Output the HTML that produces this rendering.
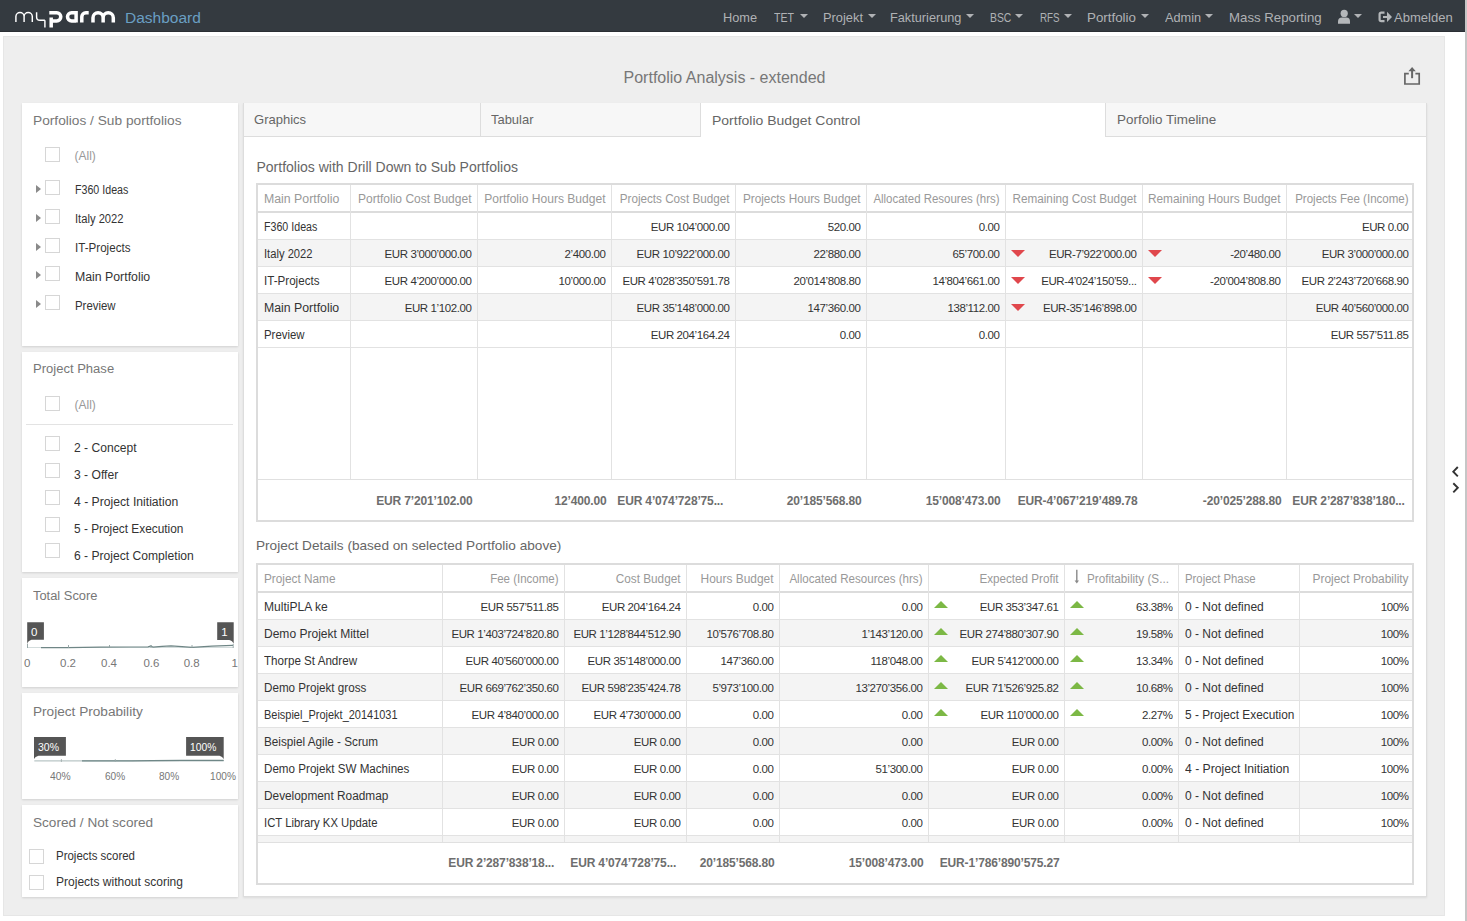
<!DOCTYPE html><html><head><meta charset="utf-8"><style>
*{box-sizing:border-box;margin:0;padding:0}
html,body{width:1467px;height:921px;overflow:hidden;background:#fff;font-family:"Liberation Sans",sans-serif;position:relative}
.abs{position:absolute}
.nav{position:absolute;left:0;top:0;width:1465px;height:31.5px;background:#343a40;border-bottom:1px solid #2b2f34}
.vline{position:absolute;left:1465px;top:0;width:2px;height:921px;background:#c6c6c6}
.nt{position:absolute;top:1.8px;height:31px;line-height:31px;font-size:13px;color:#b0b2b5;white-space:nowrap}
.caret{position:absolute;top:13.8px;width:0;height:0;border-left:4px solid transparent;border-right:4px solid transparent;border-top:4.2px solid #b0b2b5}
.panel{position:absolute;left:3px;top:36px;width:1442px;height:880px;background:#eee;border:1px solid #e6e6e6}
.title{position:absolute;left:-9px;width:1467px;text-align:center;top:68.3px;font-size:16px;color:#777;line-height:20px}
.card{position:absolute;left:22px;width:216px;background:#fff;box-shadow:0 1px 2px rgba(0,0,0,.12)}
.ct{position:absolute;left:32.5px;font-size:13.7px;color:#777;white-space:nowrap;line-height:16px}
.cb{position:absolute;width:15px;height:15px;border:1px solid #d6d6d6;background:#fff}
.it{position:absolute;font-size:12px;color:#333;white-space:nowrap;line-height:14px}
.tri{position:absolute;width:0;height:0;border-top:4.5px solid transparent;border-bottom:4.5px solid transparent;border-left:5px solid #8a8a8a}
.main{position:absolute;left:243px;top:103px;width:1184px;height:794px;background:#fff;border:1px solid #ddd;border-top:none;box-shadow:0 1px 2px rgba(0,0,0,.08)}
.tab{position:absolute;top:0;height:34px;background:#f7f7f7;border-bottom:1px solid #ddd;font-size:13.5px;color:#666;line-height:34px;white-space:nowrap}
.tab span{position:absolute;top:0;margin-top:-0.3px}
.sect{position:absolute;font-size:14px;color:#666;white-space:nowrap;line-height:16px}
.tbl{position:absolute;border:2px solid #dcdcdc;background:#fff}
.c{position:absolute;white-space:nowrap;overflow:hidden;font-size:12px;color:#333}
.h{color:#999}
.num{font-size:11.5px;letter-spacing:-0.4px}
.ft{font-weight:bold;color:#6e6e6e;font-size:12px;letter-spacing:-0.15px}
</style></head><body>
<div class="nav"></div><div class="vline"></div>
<svg class="abs" style="left:0;top:0" width="125" height="31" viewBox="0 0 125 31">
<g fill="none" stroke="#fff" stroke-linecap="butt">
<path d="M15.9 22V16.6a4.1 4.1 0 0 1 8.2 0V22M24.1 16.6a4.1 4.1 0 0 1 8.2 0V22" stroke-width="1.45"/>
<path d="M36.6 12.2V17a3.3 3.3 0 0 0 3.3 3.3H44.9M44.9 20.3V27.5" stroke-width="1.45"/>
<path d="M49.3 12.7H56.7a4.1 4.1 0 0 1 0 8.2H51.2M51.2 17.6V27.6" stroke-width="3.5"/>
<path d="M76.1 11V22.6M76.1 12.7H71.6a4.1 4.1 0 0 0 0 8.2H76.1" stroke-width="3.5"/>
<path d="M81.8 22.6V16.8a4.1 4.1 0 0 1 4.1-4.1H88.7" stroke-width="3.5"/>
<path d="M93 22.6V17.8a5.07 5.07 0 0 1 10.15 0V22.6M103.15 17.8a5.07 5.07 0 0 1 10.15 0V22.6" stroke-width="3.5"/>
</g></svg>
<div class="nt" style="left:125px;font-size:15.5px;color:#6a9fc3;top:1.5px">Dashboard</div>
<div class="nt" style="left:723.3px;display:inline-block;transform:scaleX(0.983);transform-origin:0 0">Home</div>
<div class="nt" style="left:774.0px;display:inline-block;transform:scaleX(0.813);transform-origin:0 0">TET</div>
<div class="caret" style="left:799.6px"></div>
<div class="nt" style="left:823.0px;display:inline-block;transform:scaleX(0.988);transform-origin:0 0">Projekt</div>
<div class="caret" style="left:867.5px"></div>
<div class="nt" style="left:890.0px;display:inline-block;transform:scaleX(0.979);transform-origin:0 0">Fakturierung</div>
<div class="caret" style="left:965.6px"></div>
<div class="nt" style="left:990.2px;display:inline-block;transform:scaleX(0.798);transform-origin:0 0">BSC</div>
<div class="caret" style="left:1015.0px"></div>
<div class="nt" style="left:1039.6px;display:inline-block;transform:scaleX(0.754);transform-origin:0 0">RFS</div>
<div class="caret" style="left:1063.5px"></div>
<div class="nt" style="left:1087.4px;display:inline-block;transform:scaleX(1.027);transform-origin:0 0">Portfolio</div>
<div class="caret" style="left:1141.0px"></div>
<div class="nt" style="left:1165.4px;display:inline-block;transform:scaleX(0.981);transform-origin:0 0">Admin</div>
<div class="caret" style="left:1205.3px"></div>
<div class="nt" style="left:1229.3px;display:inline-block;transform:scaleX(1.018);transform-origin:0 0">Mass Reporting</div>
<svg class="abs" style="left:1337px;top:9px" width="14" height="16" viewBox="0 0 14 16"><circle cx="7.2" cy="4.4" r="3.6" fill="#b4b7ba"/><path d="M1 14.8V12.5C1 10 2.5 8.6 5 8.6H9.4C11.9 8.6 13 10 13 12.5V14.8Z" fill="#b4b7ba"/></svg>
<div class="caret" style="left:1353.8px"></div>
<svg class="abs" style="left:1378px;top:11px" width="15" height="12" viewBox="0 0 15 12"><path d="M6.5 1.6H3.2A1.6 1.6 0 0 0 1.6 3.2V8.6A1.6 1.6 0 0 0 3.2 10.2H6.5" fill="none" stroke="#b4b7ba" stroke-width="2.2"/><path d="M5 4.9H9V0.8L14 5.9L9 11V7H5Z" fill="#b4b7ba"/></svg>
<div class="nt" style="left:1394.2px;display:inline-block;transform:scaleX(1.002);transform-origin:0 0">Abmelden</div>
<div class="panel"></div>
<div class="title">Portfolio Analysis - extended</div>
<svg class="abs" style="left:1403px;top:66px" width="19" height="20" viewBox="0 0 19 20"><path d="M5.8 7.6H1.9V18H16.2V7.6H12.4" fill="none" stroke="#666" stroke-width="1.7"/><path d="M9.1 5V12.2" stroke="#666" stroke-width="2"/><path d="M5.4 5.2L9.1 1L12.8 5.2Z" fill="#666"/></svg>
<div class="card" style="top:102.5px;height:243.5px"></div>
<div class="card" style="top:352.0px;height:219.5px"></div>
<div class="card" style="top:578.0px;height:108.5px"></div>
<div class="card" style="top:693.0px;height:106.0px"></div>
<div class="card" style="top:805.0px;height:92.0px"></div>
<div class="ct" style="top:112.8px;display:inline-block;transform:scaleX(1.001);transform-origin:0 0">Porfolios / Sub portfolios</div>
<div class="ct" style="top:361.4px;display:inline-block;transform:scaleX(0.952);transform-origin:0 0">Project Phase</div>
<div class="ct" style="top:587.9px;display:inline-block;transform:scaleX(0.942);transform-origin:0 0">Total Score</div>
<div class="ct" style="top:703.8px;display:inline-block;transform:scaleX(0.995);transform-origin:0 0">Project Probability</div>
<div class="ct" style="top:814.9px;display:inline-block;transform:scaleX(0.993);transform-origin:0 0">Scored / Not scored</div>
<div class="cb" style="left:45.0px;top:146.5px"></div>
<div class="it" style="left:74.5px;top:148.6px;color:#999">(All)</div>
<div class="tri" style="left:35.5px;top:184.7px"></div>
<div class="cb" style="left:45.0px;top:179.7px"></div>
<div class="it" style="left:74.5px;top:183.1px;display:inline-block;transform:scaleX(0.888);transform-origin:0 0">F360 Ideas</div>
<div class="tri" style="left:35.5px;top:213.6px"></div>
<div class="cb" style="left:45.0px;top:208.6px"></div>
<div class="it" style="left:74.5px;top:212.0px;display:inline-block;transform:scaleX(0.933);transform-origin:0 0">Italy 2022</div>
<div class="tri" style="left:35.5px;top:242.5px"></div>
<div class="cb" style="left:45.0px;top:237.5px"></div>
<div class="it" style="left:74.5px;top:240.9px;display:inline-block;transform:scaleX(0.967);transform-origin:0 0">IT-Projects</div>
<div class="tri" style="left:35.5px;top:271.4px"></div>
<div class="cb" style="left:45.0px;top:266.4px"></div>
<div class="it" style="left:74.5px;top:269.8px;display:inline-block;transform:scaleX(1.025);transform-origin:0 0">Main Portfolio</div>
<div class="tri" style="left:35.5px;top:300.3px"></div>
<div class="cb" style="left:45.0px;top:295.3px"></div>
<div class="it" style="left:74.5px;top:298.7px;display:inline-block;transform:scaleX(0.948);transform-origin:0 0">Preview</div>
<div class="cb" style="left:45.0px;top:395.5px"></div>
<div class="it" style="left:74.5px;top:397.5px;color:#999">(All)</div>
<div class="abs" style="left:26px;top:424px;width:207px;height:1px;background:#e3e3e3"></div>
<div class="cb" style="left:45.0px;top:435.6px"></div>
<div class="it" style="left:74.0px;top:441.0px;display:inline-block;transform:scaleX(1.008);transform-origin:0 0">2 - Concept</div>
<div class="cb" style="left:45.0px;top:462.6px"></div>
<div class="it" style="left:74.0px;top:467.9px;display:inline-block;transform:scaleX(1.011);transform-origin:0 0">3 - Offer</div>
<div class="cb" style="left:45.0px;top:489.5px"></div>
<div class="it" style="left:74.0px;top:494.9px;display:inline-block;transform:scaleX(1.015);transform-origin:0 0">4 - Project Initiation</div>
<div class="cb" style="left:45.0px;top:516.5px"></div>
<div class="it" style="left:74.0px;top:521.9px;display:inline-block;transform:scaleX(0.988);transform-origin:0 0">5 - Project Execution</div>
<div class="cb" style="left:45.0px;top:543.4px"></div>
<div class="it" style="left:74.0px;top:548.8px;display:inline-block;transform:scaleX(1.009);transform-origin:0 0">6 - Project Completion</div>
<svg class="abs" style="left:22px;top:615px" width="216" height="40" viewBox="0 0 216 40">
<path d="M5.2 7.2H21.9V24.8H9.5Q6 25.8 5.2 29.2Z" fill="#555"/>
<path d="M195.2 7.2H211.7V28.8Q210.5 25.5 207.2 24.9H195.2Z" fill="#555"/>
<line x1="5.5" y1="32.5" x2="211.2" y2="32.5" stroke="#d3dcdc" stroke-width="1"/>
<path d="M19 32.6L46 32.6L78 32.2L108 32L126 31.8L129 31L131 32.2L140 31.4L149 30.8L160 31.6L170 32.3L190 31.2L211 30.4" fill="none" stroke="#6f8686" stroke-width="1.2"/>
<path d="M46.5 30V33M87.5 30V33M129 30V33M170 30V33M5.5 29V33M211.2 29V33" stroke="#8fa0a0" stroke-width="0.9"/>
</svg>
<div class="it" style="left:31px;top:625px;color:#fff;font-size:11.5px">0</div>
<div class="it" style="left:221.2px;top:625px;color:#fff;font-size:11.5px">1</div>
<div class="it" style="left:24.0px;top:655.7px;color:#777;font-size:11.5px">0</div>
<div class="it" style="left:60.0px;top:655.7px;color:#777;font-size:11.5px">0.2</div>
<div class="it" style="left:101.0px;top:655.7px;color:#777;font-size:11.5px">0.4</div>
<div class="it" style="left:143.4px;top:655.7px;color:#777;font-size:11.5px">0.6</div>
<div class="it" style="left:183.7px;top:655.7px;color:#777;font-size:11.5px">0.8</div>
<div class="it" style="left:231.4px;top:655.7px;color:#777;font-size:11.5px">1</div>
<svg class="abs" style="left:22px;top:730px" width="216" height="40" viewBox="0 0 216 40">
<path d="M12 7H43.9V25.7H16.5Q13 26.5 12 28.9Z" fill="#555"/>
<path d="M164.1 7H201.7V29Q200.5 26.5 197.5 25.7H164.1Z" fill="#555"/>
<line x1="12.3" y1="30.8" x2="201.7" y2="30.8" stroke="#b9c6c6" stroke-width="1.2"/>
<path d="M60 30.9L110 30.8L130 30.6L160 30.4L201.7 30.3" fill="none" stroke="#6f8787" stroke-width="1.3"/>
<path d="M39.4 29V32M93.3 29V32" stroke="#9aa8a8" stroke-width="0.8"/>
</svg>
<div class="it" style="left:37.6px;top:740px;color:#fff;font-size:11.5px;display:inline-block;transform:scaleX(0.913);transform-origin:0 0">30%</div>
<div class="it" style="left:190.3px;top:740px;color:#fff;font-size:11.5px;display:inline-block;transform:scaleX(0.895);transform-origin:0 0">100%</div>
<div class="it" style="left:50.1px;top:768.7px;color:#777;font-size:11.5px;display:inline-block;transform:scaleX(0.896);transform-origin:0 0">40%</div>
<div class="it" style="left:104.5px;top:768.7px;color:#777;font-size:11.5px;display:inline-block;transform:scaleX(0.878);transform-origin:0 0">60%</div>
<div class="it" style="left:158.5px;top:768.7px;color:#777;font-size:11.5px;display:inline-block;transform:scaleX(0.878);transform-origin:0 0">80%</div>
<div class="it" style="left:209.8px;top:768.7px;color:#777;font-size:11.5px;display:inline-block;transform:scaleX(0.881);transform-origin:0 0">100%</div>
<div class="cb" style="left:29.0px;top:849.0px"></div>
<div class="it" style="left:55.5px;top:848.6px;display:inline-block;transform:scaleX(0.955);transform-origin:0 0">Projects scored</div>
<div class="cb" style="left:29.0px;top:875.3px"></div>
<div class="it" style="left:55.5px;top:874.9px;display:inline-block;transform:scaleX(1.002);transform-origin:0 0">Projects without scoring</div>
<div class="main">
<div class="tab" style="left:0.0px;width:237.0px"><span style="left:10.4px;top:0px;transform:scaleX(0.965);transform-origin:0 0">Graphics</span></div>
<div class="tab" style="left:236.0px;width:220.0px;border-left:1px solid #ddd"><span style="left:10.4px;top:0px;transform:scaleX(0.959);transform-origin:0 0">Tabular</span></div>
<div class="tab" style="left:456.0px;width:405.0px;background:#fff;border-bottom:none;top:0;border-left:1px solid #ddd"><span style="left:10.5px;top:1px;transform:scaleX(1.035);transform-origin:0 0">Portfolio Budget Control</span></div>
<div class="tab" style="left:861.0px;width:321.0px;border-left:1px solid #ddd"><span style="left:10.5px;top:0px;transform:scaleX(0.995);transform-origin:0 0">Porfolio Timeline</span></div>
</div>
<div class="sect" style="left:256.5px;top:158.6px">Portfolios with Drill Down to Sub Portfolios</div>
<div class="sect" style="left:256px;top:537.8px;font-size:13.6px">Project Details (based on selected Portfolio above)</div>
<div class="abs" style="left:256.0px;top:183.0px;width:1157.8px;height:339.0px;border:2px solid #dcdcdc;background:#fff"></div>
<div class="abs" style="left:258.0px;top:240.0px;width:1153.8px;height:26.0px;background:#f4f4f4"></div>
<div class="abs" style="left:258.0px;top:294.0px;width:1153.8px;height:26.0px;background:#f4f4f4"></div>
<div class="abs" style="left:258.0px;top:211.0px;width:1153.8px;height:2.0px;background:#dcdcdc"></div>
<div class="abs" style="left:258.0px;top:239.0px;width:1153.8px;height:1.0px;background:#e2e2e2"></div>
<div class="abs" style="left:258.0px;top:266.0px;width:1153.8px;height:1.0px;background:#e2e2e2"></div>
<div class="abs" style="left:258.0px;top:293.0px;width:1153.8px;height:1.0px;background:#e2e2e2"></div>
<div class="abs" style="left:258.0px;top:320.0px;width:1153.8px;height:1.0px;background:#e2e2e2"></div>
<div class="abs" style="left:258.0px;top:347.0px;width:1153.8px;height:1.0px;background:#e2e2e2"></div>
<div class="abs" style="left:258.0px;top:479.0px;width:1153.8px;height:1.0px;background:#e0e0e0"></div>
<div class="abs" style="left:350.0px;top:185.0px;width:1.0px;height:294.0px;background:#e2e2e2"></div>
<div class="abs" style="left:477.0px;top:185.0px;width:1.0px;height:294.0px;background:#e2e2e2"></div>
<div class="abs" style="left:611.0px;top:185.0px;width:1.0px;height:294.0px;background:#e2e2e2"></div>
<div class="abs" style="left:735.0px;top:185.0px;width:1.0px;height:294.0px;background:#e2e2e2"></div>
<div class="abs" style="left:866.0px;top:185.0px;width:1.0px;height:294.0px;background:#e2e2e2"></div>
<div class="abs" style="left:1005.0px;top:185.0px;width:1.0px;height:294.0px;background:#e2e2e2"></div>
<div class="abs" style="left:1142.0px;top:185.0px;width:1.0px;height:294.0px;background:#e2e2e2"></div>
<div class="abs" style="left:1286.0px;top:185.0px;width:1.0px;height:294.0px;background:#e2e2e2"></div>
<div class="c h" style="left:263.5px;top:191.9px;width:86.5px;transform:scaleX(1.026);transform-origin:0 0;line-height:14px">Main Portfolio</div>
<div class="c h" style="left:351.0px;top:191.9px;width:120.5px;text-align:right;transform:scaleX(1.001);transform-origin:100% 0;line-height:14px">Portfolio Cost Budget</div>
<div class="c h" style="left:478.0px;top:191.9px;width:127.5px;text-align:right;transform:scaleX(1.005);transform-origin:100% 0;line-height:14px">Portfolio Hours Budget</div>
<div class="c h" style="left:612.0px;top:191.9px;width:117.5px;text-align:right;transform:scaleX(0.974);transform-origin:100% 0;line-height:14px">Projects Cost Budget</div>
<div class="c h" style="left:736.0px;top:191.9px;width:124.5px;text-align:right;transform:scaleX(0.979);transform-origin:100% 0;line-height:14px">Projects Hours Budget</div>
<div class="c h" style="left:867.0px;top:191.9px;width:132.5px;text-align:right;transform:scaleX(0.955);transform-origin:100% 0;line-height:14px">Allocated Resoures (hrs)</div>
<div class="c h" style="left:1006.0px;top:191.9px;width:130.5px;text-align:right;transform:scaleX(0.979);transform-origin:100% 0;line-height:14px">Remaining Cost Budget</div>
<div class="c h" style="left:1143.0px;top:191.9px;width:137.5px;text-align:right;transform:scaleX(0.989);transform-origin:100% 0;line-height:14px">Remaining Hours Budget</div>
<div class="c h" style="left:1287.0px;top:191.9px;width:121.6px;text-align:right;transform:scaleX(0.961);transform-origin:100% 0;line-height:14px">Projects Fee (Income)</div>
<div class="c " style="left:263.5px;top:219.5px;width:86.5px;transform:scaleX(0.888);transform-origin:0 0;line-height:14px">F360 Ideas</div>
<div class="c num" style="left:612.0px;top:219.5px;width:117.5px;text-align:right;line-height:14px">EUR 104’000.00</div>
<div class="c num" style="left:736.0px;top:219.5px;width:124.5px;text-align:right;line-height:14px">520.00</div>
<div class="c num" style="left:867.0px;top:219.5px;width:132.5px;text-align:right;line-height:14px">0.00</div>
<div class="c num" style="left:1287.0px;top:219.5px;width:121.6px;text-align:right;line-height:14px">EUR 0.00</div>
<div class="c " style="left:263.5px;top:246.5px;width:86.5px;transform:scaleX(0.933);transform-origin:0 0;line-height:14px">Italy 2022</div>
<div class="c num" style="left:351.0px;top:246.5px;width:120.5px;text-align:right;line-height:14px">EUR 3’000’000.00</div>
<div class="c num" style="left:478.0px;top:246.5px;width:127.5px;text-align:right;line-height:14px">2’400.00</div>
<div class="c num" style="left:612.0px;top:246.5px;width:117.5px;text-align:right;line-height:14px">EUR 10’922’000.00</div>
<div class="c num" style="left:736.0px;top:246.5px;width:124.5px;text-align:right;line-height:14px">22’880.00</div>
<div class="c num" style="left:867.0px;top:246.5px;width:132.5px;text-align:right;line-height:14px">65’700.00</div>
<div class="abs" style="left:1011.4px;top:249.8px;width:0;height:0;border-left:7.5px solid transparent;border-right:7.5px solid transparent;border-top:7.5px solid #e0474c"></div>
<div class="c num" style="left:1006.0px;top:246.5px;width:130.5px;text-align:right;line-height:14px">EUR-7’922’000.00</div>
<div class="abs" style="left:1148.4px;top:249.8px;width:0;height:0;border-left:7.5px solid transparent;border-right:7.5px solid transparent;border-top:7.5px solid #e0474c"></div>
<div class="c num" style="left:1143.0px;top:246.5px;width:137.5px;text-align:right;line-height:14px">-20’480.00</div>
<div class="c num" style="left:1287.0px;top:246.5px;width:121.6px;text-align:right;line-height:14px">EUR 3’000’000.00</div>
<div class="c " style="left:263.5px;top:273.5px;width:86.5px;transform:scaleX(0.967);transform-origin:0 0;line-height:14px">IT-Projects</div>
<div class="c num" style="left:351.0px;top:273.5px;width:120.5px;text-align:right;line-height:14px">EUR 4’200’000.00</div>
<div class="c num" style="left:478.0px;top:273.5px;width:127.5px;text-align:right;line-height:14px">10’000.00</div>
<div class="c num" style="left:612.0px;top:273.5px;width:117.5px;text-align:right;line-height:14px">EUR 4’028’350’591.78</div>
<div class="c num" style="left:736.0px;top:273.5px;width:124.5px;text-align:right;line-height:14px">20’014’808.80</div>
<div class="c num" style="left:867.0px;top:273.5px;width:132.5px;text-align:right;line-height:14px">14’804’661.00</div>
<div class="abs" style="left:1011.4px;top:276.8px;width:0;height:0;border-left:7.5px solid transparent;border-right:7.5px solid transparent;border-top:7.5px solid #e0474c"></div>
<div class="c num" style="left:1006.0px;top:273.5px;width:130.5px;text-align:right;line-height:14px">EUR-4’024’150’59...</div>
<div class="abs" style="left:1148.4px;top:276.8px;width:0;height:0;border-left:7.5px solid transparent;border-right:7.5px solid transparent;border-top:7.5px solid #e0474c"></div>
<div class="c num" style="left:1143.0px;top:273.5px;width:137.5px;text-align:right;line-height:14px">-20’004’808.80</div>
<div class="c num" style="left:1287.0px;top:273.5px;width:121.6px;text-align:right;line-height:14px">EUR 2’243’720’668.90</div>
<div class="c " style="left:263.5px;top:300.5px;width:86.5px;transform:scaleX(1.025);transform-origin:0 0;line-height:14px">Main Portfolio</div>
<div class="c num" style="left:351.0px;top:300.5px;width:120.5px;text-align:right;line-height:14px">EUR 1’102.00</div>
<div class="c num" style="left:612.0px;top:300.5px;width:117.5px;text-align:right;line-height:14px">EUR 35’148’000.00</div>
<div class="c num" style="left:736.0px;top:300.5px;width:124.5px;text-align:right;line-height:14px">147’360.00</div>
<div class="c num" style="left:867.0px;top:300.5px;width:132.5px;text-align:right;line-height:14px">138’112.00</div>
<div class="abs" style="left:1011.4px;top:303.8px;width:0;height:0;border-left:7.5px solid transparent;border-right:7.5px solid transparent;border-top:7.5px solid #e0474c"></div>
<div class="c num" style="left:1006.0px;top:300.5px;width:130.5px;text-align:right;line-height:14px">EUR-35’146’898.00</div>
<div class="c num" style="left:1287.0px;top:300.5px;width:121.6px;text-align:right;line-height:14px">EUR 40’560’000.00</div>
<div class="c " style="left:263.5px;top:327.5px;width:86.5px;transform:scaleX(0.948);transform-origin:0 0;line-height:14px">Preview</div>
<div class="c num" style="left:612.0px;top:327.5px;width:117.5px;text-align:right;line-height:14px">EUR 204’164.24</div>
<div class="c num" style="left:736.0px;top:327.5px;width:124.5px;text-align:right;line-height:14px">0.00</div>
<div class="c num" style="left:867.0px;top:327.5px;width:132.5px;text-align:right;line-height:14px">0.00</div>
<div class="c num" style="left:1287.0px;top:327.5px;width:121.6px;text-align:right;line-height:14px">EUR 557’511.85</div>
<div class="c ft" style="left:351.0px;top:493.7px;width:121.5px;text-align:right;line-height:14px">EUR 7’201’102.00</div>
<div class="c ft" style="left:478.0px;top:493.7px;width:128.5px;text-align:right;line-height:14px">12’400.00</div>
<div class="c ft" style="left:617.3px;top:493.7px;width:117.7px;line-height:14px">EUR 4’074’728’75...</div>
<div class="c ft" style="left:736.0px;top:493.7px;width:125.5px;text-align:right;line-height:14px">20’185’568.80</div>
<div class="c ft" style="left:867.0px;top:493.7px;width:133.5px;text-align:right;line-height:14px">15’008’473.00</div>
<div class="c ft" style="left:1006.0px;top:493.7px;width:131.5px;text-align:right;line-height:14px">EUR-4’067’219’489.78</div>
<div class="c ft" style="left:1143.0px;top:493.7px;width:138.5px;text-align:right;line-height:14px">-20’025’288.80</div>
<div class="c ft" style="left:1292.3px;top:493.7px;width:121.5px;line-height:14px">EUR 2’287’838’180...</div>
<div class="abs" style="left:256.0px;top:563.0px;width:1157.8px;height:321.7px;border:2px solid #dcdcdc;background:#fff"></div>
<div class="abs" style="left:258.0px;top:620.0px;width:1153.8px;height:26.0px;background:#f4f4f4"></div>
<div class="abs" style="left:258.0px;top:674.0px;width:1153.8px;height:26.0px;background:#f4f4f4"></div>
<div class="abs" style="left:258.0px;top:728.0px;width:1153.8px;height:26.0px;background:#f4f4f4"></div>
<div class="abs" style="left:258.0px;top:782.0px;width:1153.8px;height:26.0px;background:#f4f4f4"></div>
<div class="abs" style="left:258.0px;top:836.0px;width:1153.8px;height:6.0px;background:#f4f4f4"></div>
<div class="abs" style="left:258.0px;top:591.0px;width:1153.8px;height:2.0px;background:#dcdcdc"></div>
<div class="abs" style="left:258.0px;top:619.0px;width:1153.8px;height:1.0px;background:#e2e2e2"></div>
<div class="abs" style="left:258.0px;top:646.0px;width:1153.8px;height:1.0px;background:#e2e2e2"></div>
<div class="abs" style="left:258.0px;top:673.0px;width:1153.8px;height:1.0px;background:#e2e2e2"></div>
<div class="abs" style="left:258.0px;top:700.0px;width:1153.8px;height:1.0px;background:#e2e2e2"></div>
<div class="abs" style="left:258.0px;top:727.0px;width:1153.8px;height:1.0px;background:#e2e2e2"></div>
<div class="abs" style="left:258.0px;top:754.0px;width:1153.8px;height:1.0px;background:#e2e2e2"></div>
<div class="abs" style="left:258.0px;top:781.0px;width:1153.8px;height:1.0px;background:#e2e2e2"></div>
<div class="abs" style="left:258.0px;top:808.0px;width:1153.8px;height:1.0px;background:#e2e2e2"></div>
<div class="abs" style="left:258.0px;top:835.0px;width:1153.8px;height:1.0px;background:#e2e2e2"></div>
<div class="abs" style="left:258.0px;top:842.0px;width:1153.8px;height:1.0px;background:#e0e0e0"></div>
<div class="abs" style="left:442.0px;top:565.0px;width:1.0px;height:277.0px;background:#e2e2e2"></div>
<div class="abs" style="left:564.0px;top:565.0px;width:1.0px;height:277.0px;background:#e2e2e2"></div>
<div class="abs" style="left:686.0px;top:565.0px;width:1.0px;height:277.0px;background:#e2e2e2"></div>
<div class="abs" style="left:779.0px;top:565.0px;width:1.0px;height:277.0px;background:#e2e2e2"></div>
<div class="abs" style="left:928.0px;top:565.0px;width:1.0px;height:277.0px;background:#e2e2e2"></div>
<div class="abs" style="left:1064.0px;top:565.0px;width:1.0px;height:277.0px;background:#e2e2e2"></div>
<div class="abs" style="left:1178.0px;top:565.0px;width:1.0px;height:277.0px;background:#e2e2e2"></div>
<div class="abs" style="left:1299.0px;top:565.0px;width:1.0px;height:277.0px;background:#e2e2e2"></div>
<div class="c h" style="left:263.5px;top:571.9px;width:178.5px;transform:scaleX(0.983);transform-origin:0 0;line-height:14px">Project Name</div>
<div class="c h" style="left:443.0px;top:571.9px;width:115.5px;text-align:right;transform:scaleX(0.958);transform-origin:100% 0;line-height:14px">Fee (Income)</div>
<div class="c h" style="left:565.0px;top:571.9px;width:115.5px;text-align:right;transform:scaleX(0.980);transform-origin:100% 0;line-height:14px">Cost Budget</div>
<div class="c h" style="left:687.0px;top:571.9px;width:86.5px;text-align:right;transform:scaleX(0.993);transform-origin:100% 0;line-height:14px">Hours Budget</div>
<div class="c h" style="left:780.0px;top:571.9px;width:142.5px;text-align:right;transform:scaleX(0.964);transform-origin:100% 0;line-height:14px">Allocated Resources (hrs)</div>
<div class="c h" style="left:929.0px;top:571.9px;width:129.5px;text-align:right;transform:scaleX(0.972);transform-origin:100% 0;line-height:14px">Expected Profit</div>
<div class="c h" style="left:1087.4px;top:571.9px;width:90.6px;transform:scaleX(0.975);transform-origin:0 0;line-height:14px">Profitability (S...</div>
<div class="c h" style="left:1184.5px;top:571.9px;width:114.5px;transform:scaleX(0.946);transform-origin:0 0;line-height:14px">Project Phase</div>
<div class="c h" style="left:1300.0px;top:571.9px;width:108.6px;text-align:right;transform:scaleX(0.994);transform-origin:100% 0;line-height:14px">Project Probability</div>
<div class="c " style="left:263.5px;top:599.5px;width:178.5px;transform:scaleX(1.005);transform-origin:0 0;line-height:14px">MultiPLA ke</div>
<div class="c num" style="left:443.0px;top:599.5px;width:115.5px;text-align:right;line-height:14px">EUR 557’511.85</div>
<div class="c num" style="left:565.0px;top:599.5px;width:115.5px;text-align:right;line-height:14px">EUR 204’164.24</div>
<div class="c num" style="left:687.0px;top:599.5px;width:86.5px;text-align:right;line-height:14px">0.00</div>
<div class="c num" style="left:780.0px;top:599.5px;width:142.5px;text-align:right;line-height:14px">0.00</div>
<div class="abs" style="left:934.4px;top:601.3px;width:0;height:0;border-left:7.3px solid transparent;border-right:7.3px solid transparent;border-bottom:7.6px solid #7cb845"></div>
<div class="c num" style="left:929.0px;top:599.5px;width:129.5px;text-align:right;line-height:14px">EUR 353’347.61</div>
<div class="abs" style="left:1070.4px;top:601.3px;width:0;height:0;border-left:7.3px solid transparent;border-right:7.3px solid transparent;border-bottom:7.6px solid #7cb845"></div>
<div class="c num" style="left:1065.0px;top:599.5px;width:107.5px;text-align:right;line-height:14px">63.38%</div>
<div class="c " style="left:1184.5px;top:599.5px;width:114.5px;transform:scaleX(1.001);transform-origin:0 0;line-height:14px">0 - Not defined</div>
<div class="c num" style="left:1300.0px;top:599.5px;width:108.6px;text-align:right;line-height:14px">100%</div>
<div class="c " style="left:263.5px;top:626.5px;width:178.5px;transform:scaleX(1.002);transform-origin:0 0;line-height:14px">Demo Projekt Mittel</div>
<div class="c num" style="left:443.0px;top:626.5px;width:115.5px;text-align:right;line-height:14px">EUR 1’403’724’820.80</div>
<div class="c num" style="left:565.0px;top:626.5px;width:115.5px;text-align:right;line-height:14px">EUR 1’128’844’512.90</div>
<div class="c num" style="left:687.0px;top:626.5px;width:86.5px;text-align:right;line-height:14px">10’576’708.80</div>
<div class="c num" style="left:780.0px;top:626.5px;width:142.5px;text-align:right;line-height:14px">1’143’120.00</div>
<div class="abs" style="left:934.4px;top:628.3px;width:0;height:0;border-left:7.3px solid transparent;border-right:7.3px solid transparent;border-bottom:7.6px solid #7cb845"></div>
<div class="c num" style="left:929.0px;top:626.5px;width:129.5px;text-align:right;line-height:14px">EUR 274’880’307.90</div>
<div class="abs" style="left:1070.4px;top:628.3px;width:0;height:0;border-left:7.3px solid transparent;border-right:7.3px solid transparent;border-bottom:7.6px solid #7cb845"></div>
<div class="c num" style="left:1065.0px;top:626.5px;width:107.5px;text-align:right;line-height:14px">19.58%</div>
<div class="c " style="left:1184.5px;top:626.5px;width:114.5px;transform:scaleX(1.001);transform-origin:0 0;line-height:14px">0 - Not defined</div>
<div class="c num" style="left:1300.0px;top:626.5px;width:108.6px;text-align:right;line-height:14px">100%</div>
<div class="c " style="left:263.5px;top:653.5px;width:178.5px;transform:scaleX(0.969);transform-origin:0 0;line-height:14px">Thorpe St Andrew</div>
<div class="c num" style="left:443.0px;top:653.5px;width:115.5px;text-align:right;line-height:14px">EUR 40’560’000.00</div>
<div class="c num" style="left:565.0px;top:653.5px;width:115.5px;text-align:right;line-height:14px">EUR 35’148’000.00</div>
<div class="c num" style="left:687.0px;top:653.5px;width:86.5px;text-align:right;line-height:14px">147’360.00</div>
<div class="c num" style="left:780.0px;top:653.5px;width:142.5px;text-align:right;line-height:14px">118’048.00</div>
<div class="abs" style="left:934.4px;top:655.3px;width:0;height:0;border-left:7.3px solid transparent;border-right:7.3px solid transparent;border-bottom:7.6px solid #7cb845"></div>
<div class="c num" style="left:929.0px;top:653.5px;width:129.5px;text-align:right;line-height:14px">EUR 5’412’000.00</div>
<div class="abs" style="left:1070.4px;top:655.3px;width:0;height:0;border-left:7.3px solid transparent;border-right:7.3px solid transparent;border-bottom:7.6px solid #7cb845"></div>
<div class="c num" style="left:1065.0px;top:653.5px;width:107.5px;text-align:right;line-height:14px">13.34%</div>
<div class="c " style="left:1184.5px;top:653.5px;width:114.5px;transform:scaleX(1.001);transform-origin:0 0;line-height:14px">0 - Not defined</div>
<div class="c num" style="left:1300.0px;top:653.5px;width:108.6px;text-align:right;line-height:14px">100%</div>
<div class="c " style="left:263.5px;top:680.5px;width:178.5px;transform:scaleX(0.971);transform-origin:0 0;line-height:14px">Demo Projekt gross</div>
<div class="c num" style="left:443.0px;top:680.5px;width:115.5px;text-align:right;line-height:14px">EUR 669’762’350.60</div>
<div class="c num" style="left:565.0px;top:680.5px;width:115.5px;text-align:right;line-height:14px">EUR 598’235’424.78</div>
<div class="c num" style="left:687.0px;top:680.5px;width:86.5px;text-align:right;line-height:14px">5’973’100.00</div>
<div class="c num" style="left:780.0px;top:680.5px;width:142.5px;text-align:right;line-height:14px">13’270’356.00</div>
<div class="abs" style="left:934.4px;top:682.3px;width:0;height:0;border-left:7.3px solid transparent;border-right:7.3px solid transparent;border-bottom:7.6px solid #7cb845"></div>
<div class="c num" style="left:929.0px;top:680.5px;width:129.5px;text-align:right;line-height:14px">EUR 71’526’925.82</div>
<div class="abs" style="left:1070.4px;top:682.3px;width:0;height:0;border-left:7.3px solid transparent;border-right:7.3px solid transparent;border-bottom:7.6px solid #7cb845"></div>
<div class="c num" style="left:1065.0px;top:680.5px;width:107.5px;text-align:right;line-height:14px">10.68%</div>
<div class="c " style="left:1184.5px;top:680.5px;width:114.5px;transform:scaleX(1.001);transform-origin:0 0;line-height:14px">0 - Not defined</div>
<div class="c num" style="left:1300.0px;top:680.5px;width:108.6px;text-align:right;line-height:14px">100%</div>
<div class="c " style="left:263.5px;top:707.5px;width:178.5px;transform:scaleX(0.914);transform-origin:0 0;line-height:14px">Beispiel_Projekt_20141031</div>
<div class="c num" style="left:443.0px;top:707.5px;width:115.5px;text-align:right;line-height:14px">EUR 4’840’000.00</div>
<div class="c num" style="left:565.0px;top:707.5px;width:115.5px;text-align:right;line-height:14px">EUR 4’730’000.00</div>
<div class="c num" style="left:687.0px;top:707.5px;width:86.5px;text-align:right;line-height:14px">0.00</div>
<div class="c num" style="left:780.0px;top:707.5px;width:142.5px;text-align:right;line-height:14px">0.00</div>
<div class="abs" style="left:934.4px;top:709.3px;width:0;height:0;border-left:7.3px solid transparent;border-right:7.3px solid transparent;border-bottom:7.6px solid #7cb845"></div>
<div class="c num" style="left:929.0px;top:707.5px;width:129.5px;text-align:right;line-height:14px">EUR 110’000.00</div>
<div class="abs" style="left:1070.4px;top:709.3px;width:0;height:0;border-left:7.3px solid transparent;border-right:7.3px solid transparent;border-bottom:7.6px solid #7cb845"></div>
<div class="c num" style="left:1065.0px;top:707.5px;width:107.5px;text-align:right;line-height:14px">2.27%</div>
<div class="c " style="left:1184.5px;top:707.5px;width:114.5px;transform:scaleX(0.988);transform-origin:0 0;line-height:14px">5 - Project Execution</div>
<div class="c num" style="left:1300.0px;top:707.5px;width:108.6px;text-align:right;line-height:14px">100%</div>
<div class="c " style="left:263.5px;top:734.5px;width:178.5px;transform:scaleX(0.978);transform-origin:0 0;line-height:14px">Beispiel Agile - Scrum</div>
<div class="c num" style="left:443.0px;top:734.5px;width:115.5px;text-align:right;line-height:14px">EUR 0.00</div>
<div class="c num" style="left:565.0px;top:734.5px;width:115.5px;text-align:right;line-height:14px">EUR 0.00</div>
<div class="c num" style="left:687.0px;top:734.5px;width:86.5px;text-align:right;line-height:14px">0.00</div>
<div class="c num" style="left:780.0px;top:734.5px;width:142.5px;text-align:right;line-height:14px">0.00</div>
<div class="c num" style="left:929.0px;top:734.5px;width:129.5px;text-align:right;line-height:14px">EUR 0.00</div>
<div class="c num" style="left:1065.0px;top:734.5px;width:107.5px;text-align:right;line-height:14px">0.00%</div>
<div class="c " style="left:1184.5px;top:734.5px;width:114.5px;transform:scaleX(1.001);transform-origin:0 0;line-height:14px">0 - Not defined</div>
<div class="c num" style="left:1300.0px;top:734.5px;width:108.6px;text-align:right;line-height:14px">100%</div>
<div class="c " style="left:263.5px;top:761.5px;width:178.5px;transform:scaleX(0.969);transform-origin:0 0;line-height:14px">Demo Projekt SW Machines</div>
<div class="c num" style="left:443.0px;top:761.5px;width:115.5px;text-align:right;line-height:14px">EUR 0.00</div>
<div class="c num" style="left:565.0px;top:761.5px;width:115.5px;text-align:right;line-height:14px">EUR 0.00</div>
<div class="c num" style="left:687.0px;top:761.5px;width:86.5px;text-align:right;line-height:14px">0.00</div>
<div class="c num" style="left:780.0px;top:761.5px;width:142.5px;text-align:right;line-height:14px">51’300.00</div>
<div class="c num" style="left:929.0px;top:761.5px;width:129.5px;text-align:right;line-height:14px">EUR 0.00</div>
<div class="c num" style="left:1065.0px;top:761.5px;width:107.5px;text-align:right;line-height:14px">0.00%</div>
<div class="c " style="left:1184.5px;top:761.5px;width:114.5px;transform:scaleX(1.015);transform-origin:0 0;line-height:14px">4 - Project Initiation</div>
<div class="c num" style="left:1300.0px;top:761.5px;width:108.6px;text-align:right;line-height:14px">100%</div>
<div class="c " style="left:263.5px;top:788.5px;width:178.5px;transform:scaleX(0.986);transform-origin:0 0;line-height:14px">Development Roadmap</div>
<div class="c num" style="left:443.0px;top:788.5px;width:115.5px;text-align:right;line-height:14px">EUR 0.00</div>
<div class="c num" style="left:565.0px;top:788.5px;width:115.5px;text-align:right;line-height:14px">EUR 0.00</div>
<div class="c num" style="left:687.0px;top:788.5px;width:86.5px;text-align:right;line-height:14px">0.00</div>
<div class="c num" style="left:780.0px;top:788.5px;width:142.5px;text-align:right;line-height:14px">0.00</div>
<div class="c num" style="left:929.0px;top:788.5px;width:129.5px;text-align:right;line-height:14px">EUR 0.00</div>
<div class="c num" style="left:1065.0px;top:788.5px;width:107.5px;text-align:right;line-height:14px">0.00%</div>
<div class="c " style="left:1184.5px;top:788.5px;width:114.5px;transform:scaleX(1.001);transform-origin:0 0;line-height:14px">0 - Not defined</div>
<div class="c num" style="left:1300.0px;top:788.5px;width:108.6px;text-align:right;line-height:14px">100%</div>
<div class="c " style="left:263.5px;top:815.5px;width:178.5px;transform:scaleX(0.942);transform-origin:0 0;line-height:14px">ICT Library KX Update</div>
<div class="c num" style="left:443.0px;top:815.5px;width:115.5px;text-align:right;line-height:14px">EUR 0.00</div>
<div class="c num" style="left:565.0px;top:815.5px;width:115.5px;text-align:right;line-height:14px">EUR 0.00</div>
<div class="c num" style="left:687.0px;top:815.5px;width:86.5px;text-align:right;line-height:14px">0.00</div>
<div class="c num" style="left:780.0px;top:815.5px;width:142.5px;text-align:right;line-height:14px">0.00</div>
<div class="c num" style="left:929.0px;top:815.5px;width:129.5px;text-align:right;line-height:14px">EUR 0.00</div>
<div class="c num" style="left:1065.0px;top:815.5px;width:107.5px;text-align:right;line-height:14px">0.00%</div>
<div class="c " style="left:1184.5px;top:815.5px;width:114.5px;transform:scaleX(1.001);transform-origin:0 0;line-height:14px">0 - Not defined</div>
<div class="c num" style="left:1300.0px;top:815.5px;width:108.6px;text-align:right;line-height:14px">100%</div>
<div class="c ft" style="left:448.3px;top:856.4px;width:115.7px;line-height:14px">EUR 2’287’838’18...</div>
<div class="c ft" style="left:570.3px;top:856.4px;width:115.7px;line-height:14px">EUR 4’074’728’75...</div>
<div class="c ft" style="left:687.0px;top:856.4px;width:87.5px;text-align:right;line-height:14px">20’185’568.80</div>
<div class="c ft" style="left:780.0px;top:856.4px;width:143.5px;text-align:right;line-height:14px">15’008’473.00</div>
<div class="c ft" style="left:929.0px;top:856.4px;width:130.5px;text-align:right;line-height:14px">EUR-1’786’890’575.27</div>
<svg class="abs" style="left:1072px;top:568px" width="10" height="18" viewBox="0 0 10 18"><path d="M4.8 1.8V13.5" stroke="#8a8a8a" stroke-width="1.4"/><path d="M2.6 12.6H7L4.8 15.6Z" fill="#8a8a8a"/></svg>
<svg class="abs" style="left:1450px;top:465px" width="12" height="30" viewBox="0 0 12 30"><path d="M7.8 2L3.3 6.7L7.8 11.3M3.3 18.3L7.8 22.7L3.3 27.3" fill="none" stroke="#333" stroke-width="1.9"/></svg>
</body></html>
